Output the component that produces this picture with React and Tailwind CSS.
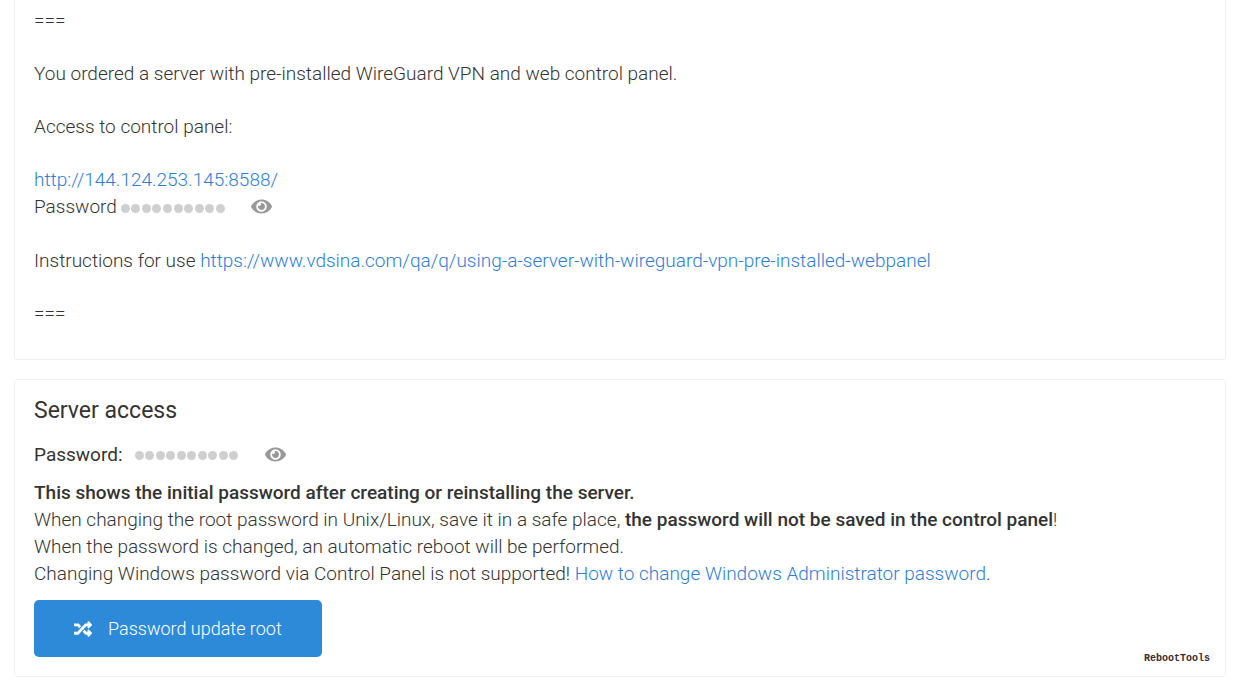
import React, { useState } from 'react';
import { FaEye, FaRandom } from 'react-icons/fa';

const HiddenPassword = ({ label }) => {
  const [visible, setVisible] = useState(false);

  return (
    <>
      <span className="flex w-[104px] justify-between pt-[3px]" role="img" aria-label={label}>
        {Array.from({ length: 10 }, (_, i) => (
          <span key={i} className="size-[9px] rounded-full bg-[#cfcfcf]" />
        ))}
      </span>
      <button
        type="button"
        aria-label="Show password"
        aria-pressed={visible}
        onClick={() => setVisible(!visible)}
        className="ml-[26px] cursor-pointer text-[#999999]"
      >
        <FaEye className="h-[19px] w-[21px]" />
      </button>
    </>
  );
};

const Link = ({ href, children }) => (
  <a href={href} className="text-[#2d7dd8] hover:underline">
    {children}
  </a>
);

const OrderInfo = () => (
  <section className="flex flex-col gap-[26px] rounded-b border border-t-0 border-[#efefef] px-[19px] pt-[7px] pb-8">
    <p>===</p>
    <p>You ordered a server with pre-installed WireGuard VPN and web control panel.</p>
    <p>Access to control panel:</p>
    <div className="pb-px">
      <p>
        <Link href="http://144.124.253.145:8588/">http://144.124.253.145:8588/</Link>
      </p>
      <div className="flex h-[27px] items-center">
        <span className="mr-1">Password</span>
        <HiddenPassword label="Hidden panel password" />
      </div>
    </div>
    <p>
      Instructions for use{' '}
      <Link href="https://www.vdsina.com/qa/q/using-a-server-with-wireguard-vpn-pre-installed-webpanel">
        https://www.vdsina.com/qa/q/using-a-server-with-wireguard-vpn-pre-installed-webpanel
      </Link>
    </p>
    <p>===</p>
  </section>
);

const ServerAccess = () => (
  <section className="relative mt-[19px] rounded border border-[#efefef] px-[19px] pt-[17px] pb-[19px]">
    <h2 className="text-[23px] leading-7 font-normal">Server access</h2>
    <div className="mt-[15px] flex h-7 items-center">
      <span className="mr-3 font-normal">Password:</span>
      <HiddenPassword label="Hidden server password" />
    </div>
    <div className="mt-[11px]">
      <p className="font-medium">This shows the initial password after creating or reinstalling the server.</p>
      <p>
        When changing the root password in Unix/Linux, save it in a safe place,{' '}
        <strong className="font-medium">the password will not be saved in the control panel</strong>!
      </p>
      <p>When the password is changed, an automatic reboot will be performed.</p>
      <p>
        Changing Windows password via Control Panel is not supported!{' '}
        <Link href="#windows-password">How to change Windows Administrator password</Link>.
      </p>
    </div>
    <button
      type="button"
      className="mt-[13px] flex h-[57px] cursor-pointer items-center rounded-[5px] bg-[#2d8ad8] px-10 text-[18px] text-white"
    >
      <FaRandom className="mr-4 size-[18px]" />
      Password update root
    </button>
    <span className="absolute right-[15px] bottom-[11px] font-['Liberation_Mono',monospace] text-[10px] leading-3 font-bold text-[#3c2a2a]">
      RebootTools
    </span>
  </section>
);

const App = () => (
  <main className="min-h-screen bg-white pr-[9px] pb-[11px] pl-[14px] font-[Roboto,sans-serif] text-[19px] leading-[27px] font-light text-[#333333]">
    <OrderInfo />
    <ServerAccess />
  </main>
);

export default App;
